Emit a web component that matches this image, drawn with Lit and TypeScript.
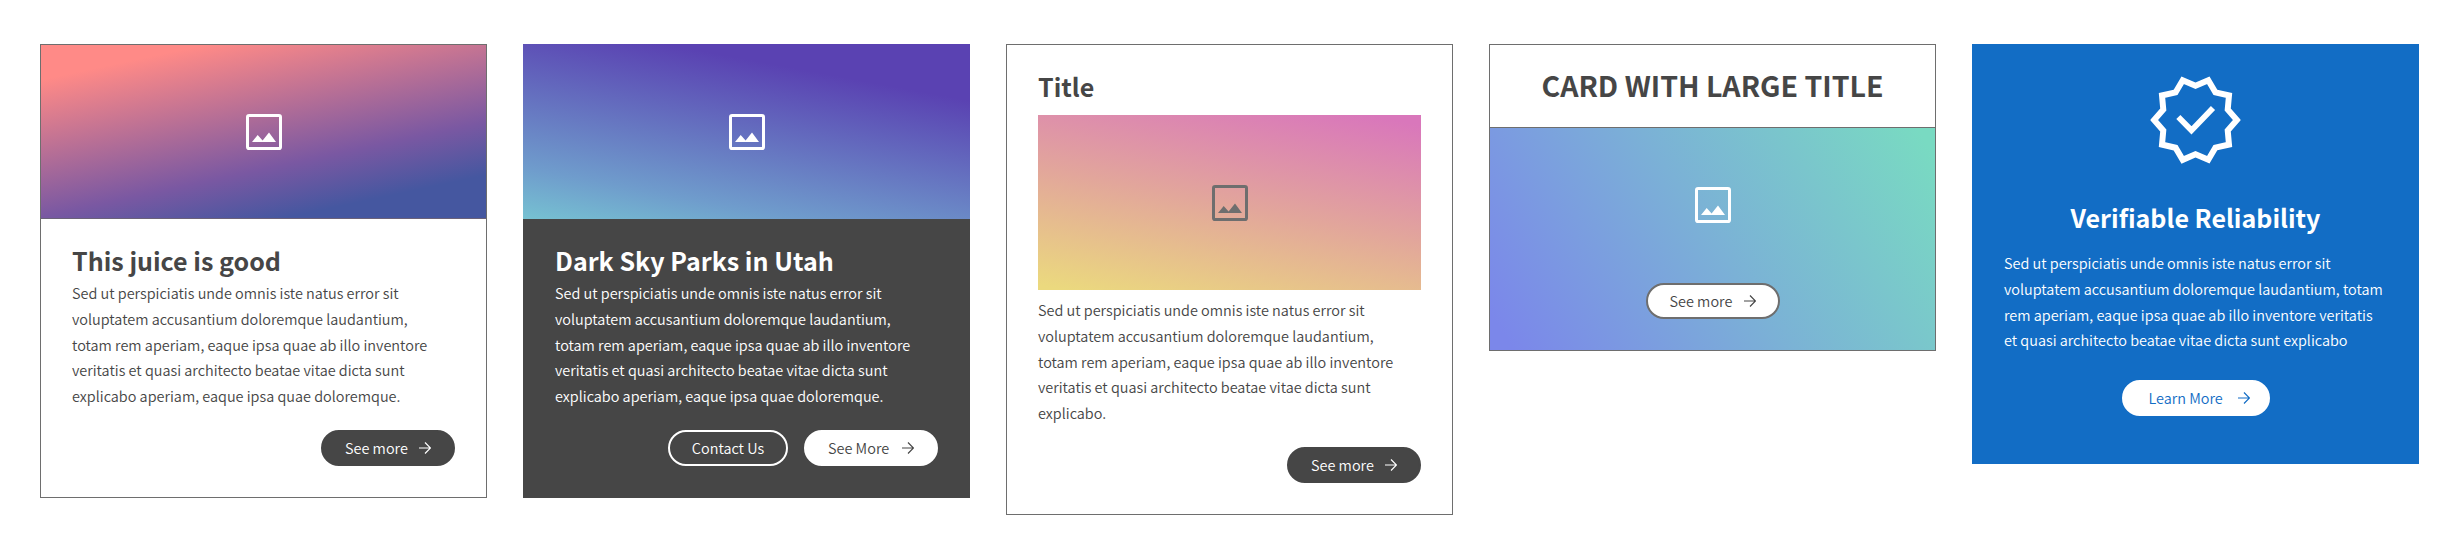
import { LitElement, html, css, svg, nothing } from "lit";
import { customElement, property } from "lit/decorators.js";

@customElement("photo-icon")
export class PhotoIcon extends LitElement {
  static styles = css`
    :host { display: block; width: 36px; height: 36px; }
    svg { display: block; width: 36px; height: 36px; }
  `;
  render() {
    return html`<svg viewBox="0 0 36 36">
      <rect x="1.5" y="1.5" width="33" height="33" rx="1.6" fill="none" stroke="currentColor" stroke-width="3"></rect>
      <path d="M6 28 L11.7 21 L16.6 26.4 L23 18.4 L30 28 Z" fill="currentColor"></path>
    </svg>`;
  }
}

@customElement("seal-icon")
export class SealIcon extends LitElement {
  static styles = css`
    :host { display: block; width: 99px; height: 100px; }
    svg { display: block; width: 99px; height: 100px; }
  `;
  render() {
    const outline =
      "M23 12l-2.44-2.78.34-3.68-3.61-.82-1.89-3.18L12 3 8.6 1.54 6.71 4.72l-3.61.81.34 3.68L1 12l2.44 2.78-.34 3.69 3.61.82 1.89 3.18L12 21l3.4 1.46 1.89-3.18 3.61-.82-.34-3.68L23 12z";
    return html`<svg viewBox="0 0 24 24" preserveAspectRatio="none">
      ${svg`<clipPath id="seal"><path d=${outline}></path></clipPath>
      <path d=${outline} fill="none" stroke="currentColor" stroke-width="2.9" clip-path="url(#seal)"></path>
      <path d="M7.84 11.28 L11.02 14.5 L16.24 9.1" fill="none" stroke="currentColor" stroke-width="1.4"></path>`}
    </svg>`;
  }
}

@customElement("pill-button")
export class PillButton extends LitElement {
  @property() label = "";
  @property({ reflect: true }) variant = "dark";
  @property({ type: Boolean }) arrow = false;

  static styles = css`
    :host { display: inline-flex; }
    button {
      box-sizing: border-box;
      display: flex;
      align-items: center;
      justify-content: space-between;
      width: 134px;
      height: 36px;
      padding: 0 22px;
      border: 2px solid #464646;
      border-radius: 18px;
      background: #464646;
      color: #fff;
      font: inherit;
      line-height: 32px;
      white-space: nowrap;
    }
    svg { display: block; width: 12px; height: 12px; flex: none; }
    :host([variant="outline"]) button { width: 120px; justify-content: center; border-color: #fff; background: transparent; }
    :host([variant="light"]) button { border-color: #fff; background: #fff; color: #464646; }
    :host([variant="ringed"]) button { border-color: #6e6e6e; background: #fff; color: #464646; }
    :host([variant="blue"]) button { width: 148px; padding: 0 18px 0 25px; border-color: #fff; background: #fff; color: #126dc5; }
  `;
  render() {
    return html`<button>
      <span>${this.label}</span>
      ${this.arrow
        ? html`<svg viewBox="0 0 12 12" fill="none" stroke="currentColor" stroke-width="1.2">
            <path d="M0 6 H11.2 M6 0.5 L11.5 6 L6 11.5"></path>
          </svg>`
        : nothing}
    </button>`;
  }
}

@customElement("app-root")
export class AppRoot extends LitElement {
  static styles = css`
    :host {
      box-sizing: border-box;
      display: flex;
      align-items: flex-start;
      gap: 36px;
      width: 2463px;
      height: 552px;
      padding: 44px 40px;
      background: #fff;
      color: #464646;
      font-family: "Noto Sans CJK SC", "Noto Sans", sans-serif;
      font-size: 14.45px;
      font-weight: 350;
    }
    .card { box-sizing: border-box; width: 447px; flex: none; display: flex; flex-direction: column; }
    .bordered { border: 1px solid #6e6e6e; background: #fff; }
    .dark { background: #464646; color: #fff; }
    .blue { background: #126dc5; color: #fff; align-items: center; padding: 26px 32px 48px; }
    .image { display: flex; align-items: center; justify-content: center; height: 175px; color: #fff; }
    .sunset { height: 174px; box-sizing: border-box; padding-top: 1px; border-bottom: 1px solid #6b6279; background: linear-gradient(168deg, #ff8a87 13%, #7a58a2 64%, #4557a0 84%); }
    .night { background: linear-gradient(190.5deg, #5a42b2 22%, #6f9ccc 80%, #78cbd3 105%); }
    .candy { margin: 11px 0 7px; color: #6e6e6e; background: linear-gradient(191deg, #d977bb 4%, #e2a69b 51%, #ebd97e 98%); }
    .lagoon { flex-direction: column; justify-content: flex-start; box-sizing: border-box; height: 222px; padding: 59px 0 0; gap: 60px; background: linear-gradient(57deg, #7b87ea 4%, #7bb1d6 50%, #79dac2 97%); }
    .body { padding: 24px 31px 31px; }
    .dark .body { padding: 24px 32px 32px; }
    h2 { margin: 0; font-size: 25.05px; line-height: 35px; font-weight: 700; white-space: nowrap; }
    h2.tight { margin-bottom: 2px; }
    .headline { height: 82px; border-bottom: 1px solid #6e6e6e; font-size: 28.5px; line-height: 80px; text-align: center; }
    p { margin: 0; height: 129px; line-height: 25.75px; white-space: nowrap; }
    .actions { display: flex; justify-content: flex-end; gap: 16px; margin-top: 21px; }
    .blue h2 { margin: 30px 0 15px; }
    .blue p { align-self: flex-start; height: 103px; margin-bottom: 27px; }
  `;
  render() {
    return html`
      <section class="card bordered">
        <div class="image sunset"><photo-icon></photo-icon></div>
        <div class="body">
          <h2 class="tight">This juice is good</h2>
          <p>Sed ut perspiciatis unde omnis iste natus error sit<br />voluptatem accusantium doloremque laudantium,<br />totam rem aperiam, eaque ipsa quae ab illo inventore<br />veritatis et quasi architecto beatae vitae dicta sunt<br />explicabo aperiam, eaque ipsa quae doloremque.</p>
          <div class="actions"><pill-button label="See more" arrow></pill-button></div>
        </div>
      </section>
      <section class="card dark">
        <div class="image night"><photo-icon></photo-icon></div>
        <div class="body">
          <h2 class="tight">Dark Sky Parks in Utah</h2>
          <p>Sed ut perspiciatis unde omnis iste natus error sit<br />voluptatem accusantium doloremque laudantium,<br />totam rem aperiam, eaque ipsa quae ab illo inventore<br />veritatis et quasi architecto beatae vitae dicta sunt<br />explicabo aperiam, eaque ipsa quae doloremque.</p>
          <div class="actions">
            <pill-button label="Contact Us" variant="outline"></pill-button>
            <pill-button label="See More" variant="light" arrow></pill-button>
          </div>
        </div>
      </section>
      <section class="card bordered">
        <div class="body">
          <h2>Title</h2>
          <div class="image candy"><photo-icon></photo-icon></div>
          <p>Sed ut perspiciatis unde omnis iste natus error sit<br />voluptatem accusantium doloremque laudantium,<br />totam rem aperiam, eaque ipsa quae ab illo inventore<br />veritatis et quasi architecto beatae vitae dicta sunt<br />explicabo.</p>
          <div class="actions"><pill-button label="See more" arrow></pill-button></div>
        </div>
      </section>
      <section class="card bordered">
        <h2 class="headline">CARD WITH LARGE TITLE</h2>
        <div class="image lagoon">
          <photo-icon></photo-icon>
          <pill-button label="See more" variant="ringed" arrow></pill-button>
        </div>
      </section>
      <section class="card blue">
        <seal-icon></seal-icon>
        <h2>Verifiable Reliability</h2>
        <p>Sed ut perspiciatis unde omnis iste natus error sit<br />voluptatem accusantium doloremque laudantium, totam<br />rem aperiam, eaque ipsa quae ab illo inventore veritatis<br />et quasi architecto beatae vitae dicta sunt explicabo</p>
        <pill-button label="Learn More" variant="blue" arrow></pill-button>
      </section>
    `;
  }
}
